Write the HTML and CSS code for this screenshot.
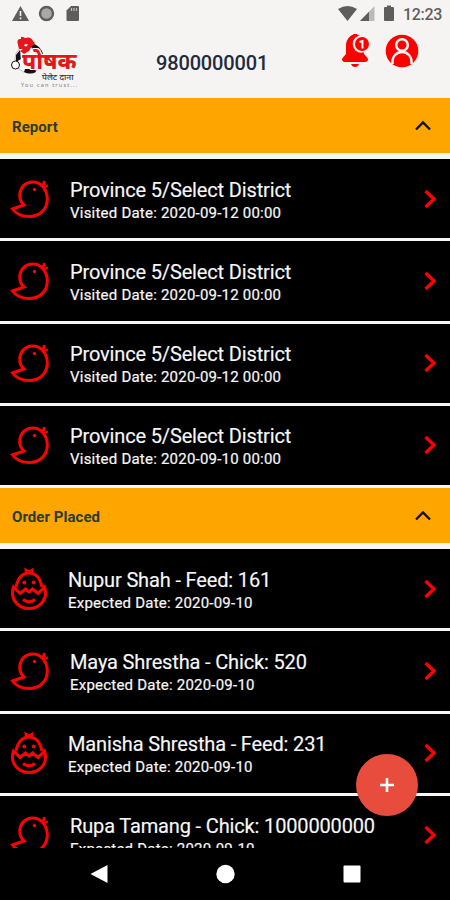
FILE: index.html
```html
<!DOCTYPE html>
<html lang="en">
<head>
<meta charset="utf-8">
<title>Poshak</title>
<link rel="stylesheet" href="styles.css">
</head>
<body>
<svg class="defs" aria-hidden="true">
  <symbol id="chick" viewBox="0 0 40 42">
    <path d="M2.500 31 L14 27 C10.500 24 9.500 20 9.800 16 C10.500 9 15.500 4 22.500 4 C31 4 37.300 11.500 37.300 21 C37.300 31.500 29.500 38.500 19.500 38.500 C11.500 38.500 6 36 2.500 31 Z"/>
    <path stroke-width="2" d="M32.500 8 L34 3 M33.500 9 L38 7.500 M34 3 L35 7"/>
    <circle class="eye" cx="24.500" cy="11.500" r="1.700"/>
  </symbol>
  <symbol id="egg" viewBox="0 0 38 44">
    <path d="M6 20 C7.500 13 11 6 19 6 C27 6 30.500 13 32 20"/>
    <path stroke-width="2" d="M16 5.500 L15.500 2.500 L19 4.500 L22.500 2.500 L22 5.500"/>
    <path d="M3.500 20 L10 26.500 L15.500 22 L19 25 L22.500 22 L28 26.500 L34.500 20 C38.500 32 30 41.500 19 41.500 C8 41.500 -0.500 32 3.500 20 Z"/>
    <path d="M13 32.500 Q19 37 25 32.500"/>
    <circle class="eye" cx="14.300" cy="15.500" r="2"/><circle class="eye" cx="23.700" cy="15.500" r="2"/>
  </symbol>
  <symbol id="next" viewBox="0 0 12 20"><path d="M1.500 2 L10 10 L1.500 18"/></symbol>
  <symbol id="up" viewBox="0 0 18 12"><path d="M2 9.500 L9 2.500 L16 9.500"/></symbol>
</svg>
<div class="screen">
  <header class="header">
    <div class="status">
      <svg class="status-left" width="70" height="18" viewBox="0 0 70 18">
        <path fill="#5f5d5c" d="M8.500 1 L17 16 H0 Z"/><path stroke="#f6f4f3" stroke-width="1.600" d="M8.500 6 V11 M8.500 12.500 V14.200"/>
        <circle cx="34.500" cy="8.500" r="6.500" fill="#aaa8a7" stroke="#5f5d5c" stroke-width="2.400"/>
        <path fill="#5f5d5c" d="M59 1 H66 Q67 1 67 2 V15 Q67 16 66 16 H55.500 Q54.500 16 54.500 15 V5.500 Z"/><path stroke="#bbb" stroke-width="1.200" d="M59.500 3 V6 M62 3 V6 M64.500 3 V6"/>
      </svg>
      <div class="status-right">
        <svg width="60" height="18" viewBox="0 0 60 18">
          <path fill="#5f5d5c" d="M0 4 Q9.500 -2 19 4 L9.500 16 Z"/>
          <path fill="#bcbab9" d="M36.500 1 V16 H22 Z"/><path fill="#5f5d5c" d="M31 6.700 V16 H22 Z"/>
          <path fill="#5f5d5c" d="M49 0.500 H53 V2 H55 Q56 2 56 3 V15 Q56 16 55 16 H47 Q46 16 46 15 V3 Q46 2 47 2 H49 Z"/>
        </svg>
        <span class="clock">12:23</span>
      </div>
    </div>
    <div class="brand-row">
      <div class="logo">
        <svg width="66" height="44" viewBox="0 0 66 44">
          <circle cx="18" cy="24" r="14" fill="#fff" stroke="#999" stroke-width=".7"/>
          <path fill="#111" d="M19 8 Q31 10 32.500 21 L27 20 Q21 17 19 8 Z M5 20 L9 15 L10 24 L5 27 Z M14 34 L24 34 L25 37 Q19 40 13 37 Z"/>
          <circle cx="4.500" cy="30" r="4" fill="#fff" stroke="#111"/>
          <path fill="#e6151a" d="M7 10 Q5 3 10 4 Q9 0 14 3 Q20 1 22 6 Q26 9 21 11 L18 16 L13 19 L9 16 L12 14 L8 14 Z"/>
          <path fill="#fff" d="M14 9 L17 9.500 L15.500 11.500 L13 11 Z"/>
        </svg>
        <span class="logo-name">पोषक</span>
        <span class="logo-sub">पेलेट दाना</span>
        <span class="logo-tag">You can trust...</span>
      </div>
      <h1 class="phone">9800000001</h1>
      <div class="actions">
        <svg width="28" height="34" viewBox="0 0 28 34">
          <path fill="#f00" d="M12 0 Q14 -1 16 1 Q22 3 22 10 V20 Q25 23 26 25 Q26 28 23 28 H3 Q0 28 0 25 Q1 23 4 20 V10 Q5 3 12 0 Z M9 30 H17 Q16 33 13 33 Q10 33 9 30 Z"/>
          <circle cx="19.500" cy="10" r="8.800" fill="#f6f4f3"/><circle cx="20" cy="10" r="7" fill="#f00"/>
          <path fill="none" stroke="#fff" stroke-width="1.900" d="M17.500 8 L20.500 7 V14.500"/>
        </svg>
        <svg width="34" height="34" viewBox="0 0 34 34">
          <circle cx="17" cy="17" r="16.300" fill="#f00"/>
          <path fill="#f00" stroke="#f6f4f3" stroke-width="2.500" d="M7.500 30 C6 14 28 14 26.500 30"/>
          <circle cx="17" cy="11" r="5.800" fill="#f00" stroke="#f6f4f3" stroke-width="2.500"/>
        </svg>
      </div>
    </div>
  </header>
  <main class="list">
    <section>
      <h2 class="bar"><span>Report</span><svg class="up"><use href="#up"/></svg></h2>
      <div class="row"><svg class="chick"><use href="#chick"/></svg><div class="text"><p class="title">Province 5/Select District</p><p class="sub">Visited Date: 2020-09-12 00:00</p></div><svg class="next"><use href="#next"/></svg></div>
      <div class="row"><svg class="chick"><use href="#chick"/></svg><div class="text"><p class="title">Province 5/Select District</p><p class="sub">Visited Date: 2020-09-12 00:00</p></div><svg class="next"><use href="#next"/></svg></div>
      <div class="row"><svg class="chick"><use href="#chick"/></svg><div class="text"><p class="title">Province 5/Select District</p><p class="sub">Visited Date: 2020-09-12 00:00</p></div><svg class="next"><use href="#next"/></svg></div>
      <div class="row"><svg class="chick"><use href="#chick"/></svg><div class="text"><p class="title">Province 5/Select District</p><p class="sub">Visited Date: 2020-09-10 00:00</p></div><svg class="next"><use href="#next"/></svg></div>
    </section>
    <section>
      <h2 class="bar"><span>Order Placed</span><svg class="up"><use href="#up"/></svg></h2>
      <div class="row"><svg class="egg"><use href="#egg"/></svg><div class="text"><p class="title">Nupur Shah - Feed: 161</p><p class="sub">Expected Date: 2020-09-10</p></div><svg class="next"><use href="#next"/></svg></div>
      <div class="row"><svg class="chick"><use href="#chick"/></svg><div class="text"><p class="title">Maya Shrestha - Chick: 520</p><p class="sub">Expected Date: 2020-09-10</p></div><svg class="next"><use href="#next"/></svg></div>
      <div class="row"><svg class="egg"><use href="#egg"/></svg><div class="text"><p class="title">Manisha Shrestha - Feed: 231</p><p class="sub">Expected Date: 2020-09-10</p></div><svg class="next"><use href="#next"/></svg></div>
      <div class="row"><svg class="chick"><use href="#chick"/></svg><div class="text"><p class="title">Rupa Tamang - Chick: 1000000000</p><p class="sub">Expected Date: 2020-09-10</p></div><svg class="next"><use href="#next"/></svg></div>
    </section>
  </main>
  <button class="fab" aria-label="Add"><svg width="16" height="16" viewBox="0 0 16 16"><path stroke="#fff" stroke-width="2.600" d="M8 1 V15 M1 8 H15"/></svg></button>
  <nav class="nav">
    <svg width="450" height="52" viewBox="0 0 450 52" fill="#fff"><path d="M90.500 26 L107.500 17 V35 Z"/><circle cx="225.500" cy="26" r="9.200"/><rect x="343.500" y="17.500" width="17" height="17" rx="1"/></svg>
  </nav>
</div>
</body>
</html>
```
FILE: styles.css
```css
* { box-sizing: border-box; }
body { margin: 0; font-family: Roboto, "Liberation Sans", sans-serif; }
h1, h2, p { margin: 0; }
.defs { position: absolute; width: 0; height: 0; }
.screen { position: relative; display: flex; flex-direction: column; width: 450px; height: 900px; overflow: hidden; background: #000; }
.header { flex: none; height: 98px; background: #f6f4f3; }
.status { display: flex; justify-content: space-between; height: 28px; padding: 5px 8px 0 12px; }
.status-right { display: flex; gap: 5px; }
.clock { width: 39px; font-size: 16px; line-height: 19px; color: #5f5d5c; white-space: nowrap; letter-spacing: -.3px; font-weight: 500; }
.brand-row { display: flex; height: 70px; }
.logo { position: relative; width: 80px; margin-left: 11px; padding-top: 7px; }
.logo span { position: absolute; white-space: nowrap; font-family: "Noto Sans", "Noto Sans Devanagari", sans-serif; }
.logo .logo-name { left: 11px; top: 23px; font-size: 22.500px; line-height: 20px; font-weight: 800; color: #e6151a; text-shadow: 1px 1px 0 #fff, -1px -1px 0 #fff, 1px -1px 0 #fff, -1px 1px 0 #fff; }
.logo .logo-sub { left: 31px; top: 44px; font-size: 8.500px; line-height: 9px; font-weight: 500; color: #333; }
.logo .logo-tag { left: 10px; top: 53px; font-size: 5.500px; line-height: 8px; letter-spacing: 1.200px; color: #777; }
.phone { width: 241px; padding-left: 65px; font-size: 20px; line-height: 70px; font-weight: 500; letter-spacing: -.15px; color: #222b3d; }
.actions { display: flex; gap: 15px; margin-left: 10px; padding-top: 6px; }
.list { flex: none; height: 750px; overflow: hidden; background: #f6f6f6; }
.bar { display: flex; align-items: center; justify-content: space-between; height: 55px; padding: 2px 18px 0 12px; margin-bottom: 6px; background: #ffa500; color: #2b3b3b; font-size: 15px; font-weight: 700; letter-spacing: .05px; }
.up { width: 18px; height: 12px; margin-top: -2px; fill: none; stroke: #111; stroke-width: 2.300; }
.row { display: flex; align-items: center; height: 79.250px; margin-bottom: 3px; padding: 0 14px 0 10px; background: #000; color: #f7f7f7; }
.chick { width: 40px; height: 42px; margin-right: 20px; fill: none; stroke: #f00; stroke-width: 3; }
.egg { width: 38px; height: 44px; margin-right: 20px; fill: none; stroke: #f00; stroke-width: 3; }
.eye { fill: #f00; stroke: none; }
.text { flex: 1; padding-top: 4px; white-space: nowrap; }
.title { font-size: 20px; line-height: 24px; letter-spacing: -.15px; -webkit-text-stroke: .15px; }
.sub { font-size: 15px; line-height: 22px; letter-spacing: .22px; -webkit-text-stroke: .2px; }
.next { width: 12px; height: 20px; fill: none; stroke: #f00; stroke-width: 3.300; }
.fab { position: absolute; left: 356px; top: 754px; width: 62px; height: 62px; border: 0; border-radius: 50%; background: #e84c3d; display: flex; align-items: center; justify-content: center; padding: 0; }
.nav { height: 52px; background: #000; }
```
